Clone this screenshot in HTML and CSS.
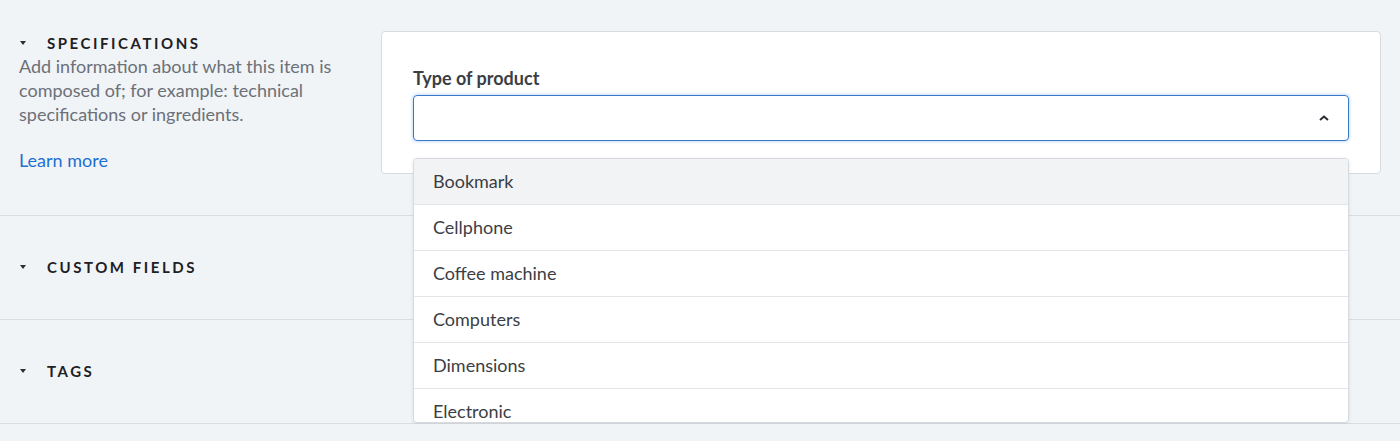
FILE: index.html
```html
<!DOCTYPE html>
<html lang="en">
<head>
<meta charset="utf-8">
<title>Specifications</title>
<link rel="stylesheet" href="styles.css">
</head>
<body>
<div class="page">
  <section class="section section--open">
    <div class="side">
      <h2 class="heading"><svg class="caret" viewBox="0 0 6 4" width="6" height="4"><path d="M0 0H6L3 4Z"/></svg>SPECIFICATIONS</h2>
      <p class="desc">Add information about what this item is composed of; for example: technical specifications or ingredients.</p>
      <a class="learn" href="#">Learn more</a>
    </div>
    <div class="card">
      <label class="label">Type of product</label>
      <div class="select">
        <div class="input">
          <svg class="chev" viewBox="0 0 10 6" width="10" height="6"><path d="M1 5L5 1.5L9 5" fill="none" stroke="#2b2e33" stroke-width="2"/></svg>
        </div>
        <ul class="menu">
          <li class="item item--active">Bookmark</li>
          <li class="item">Cellphone</li>
          <li class="item">Coffee machine</li>
          <li class="item">Computers</li>
          <li class="item">Dimensions</li>
          <li class="item">Electronic</li>
        </ul>
      </div>
    </div>
  </section>
  <section class="section section--closed">
    <h2 class="heading"><svg class="caret" viewBox="0 0 6 4" width="6" height="4"><path d="M0 0H6L3 4Z"/></svg>CUSTOM FIELDS</h2>
  </section>
  <section class="section section--closed">
    <h2 class="heading"><svg class="caret" viewBox="0 0 6 4" width="6" height="4"><path d="M0 0H6L3 4Z"/></svg>TAGS</h2>
  </section>
</div>
</body>
</html>
```

FILE: styles.css
```css
* { box-sizing: border-box; }
html, body { margin: 0; padding: 0; }
body {
  background: #f1f4f7;
  font-family: Lato, "Open Sans", sans-serif;
  color: #3b3e44;
}
.page { display: flex; flex-direction: column; }
.section {
  border-bottom: 1px solid #dadde1;
  padding: 0 19px;
}
.section--open {
  display: flex;
  gap: 26px;
  padding-top: 31px;
  padding-bottom: 41px;
}
.section--closed {
  padding-top: 39px;
  padding-bottom: 40px;
}
.side { width: 336px; flex: none; }
.heading {
  margin: 0;
  display: flex;
  align-items: center;
  font-size: 15px;
  line-height: 24px;
  font-weight: 700;
  letter-spacing: 2.55px;
  color: #1d2024;
}
.caret {
  fill: #2b2e33;
  margin-left: 1px;
  margin-right: 21px;
  flex: none;
}
.desc {
  margin: -1px 0 0;
  font-size: 18px;
  line-height: 24px;
  color: #6c7077;
}
.learn {
  display: inline-block;
  margin-top: 22px;
  font-size: 18px;
  line-height: 24px;
  color: #1d6fd0;
  text-decoration: none;
}
.card {
  flex: 1;
  background: #fff;
  border: 1px solid #d8dbdf;
  border-radius: 4px;
  padding: 34px 31px 32px;
  height: 143px;
}
.label {
  display: block;
  font-size: 18px;
  line-height: 24px;
  font-weight: 700;
  color: #3b3e44;
  margin-bottom: 5px;
}
.select { position: relative; }
.input {
  height: 46px;
  border: 1px solid #3a78c9;
  border-radius: 4px;
  box-shadow: 0 0 3px 1px rgba(90, 160, 240, 0.35);
  display: flex;
  align-items: center;
  justify-content: flex-end;
  padding-right: 19px;
}
.chev { margin-top: -1px; }
.menu {
  position: absolute;
  z-index: 5;
  left: 0;
  right: 0;
  top: 63px;
  height: 265px;
  overflow: hidden;
  margin: 0;
  padding: 0;
  list-style: none;
  background: #fff;
  border: 1px solid #d6d9dd;
  border-radius: 4px;
  box-shadow: 0 1px 4px rgba(0, 0, 0, 0.08);
}
.item {
  height: 46px;
  border-bottom: 1px solid #e3e5e8;
  padding: 0 19px 2px;
  display: flex;
  align-items: center;
  font-size: 18px;
  color: #3b3e44;
}
.item--active { background: #f2f3f5; }
```
